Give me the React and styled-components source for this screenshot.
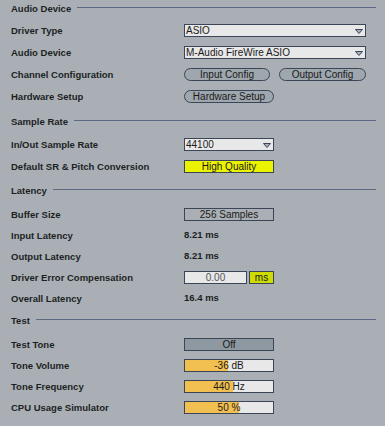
import React from "react";
import styled, { createGlobalStyle } from "styled-components";

const GlobalStyle = createGlobalStyle`
  html, body {
    margin: 0;
    padding: 0;
    background: #a9afb4;
  }
  body {
    font-family: "Liberation Sans", Arial, sans-serif;
    color: #1c1f24;
  }
`;

const Page = styled.div`
  width: 385px;
  height: 426px;
  padding: 0 9px 0 11px;
  box-sizing: border-box;
  background: #a9afb4;
  overflow: hidden;
`;

const Header = styled.div`
  display: flex;
  align-items: center;
  height: 16px;
  margin-top: ${(p) => p.$top || 0}px;
  font-size: 9.5px;
  font-weight: bold;

  &::after {
    content: "";
    flex: 1;
    height: 1px;
    margin: -1px 0 0 6px;
    background: #5d6a84;
  }
`;

const Rows = styled.div`
  display: flex;
  flex-direction: column;
  margin-top: ${(p) => p.$top || 0}px;
`;

const Row = styled.div`
  display: flex;
  align-items: center;
  height: ${(p) => p.$h || 21}px;
`;

const Label = styled.div`
  width: 173px;
  flex: none;
  font-size: 9.5px;
  font-weight: bold;
  white-space: nowrap;
`;

const Controls = styled.div`
  display: flex;
  align-items: center;
  gap: ${(p) => p.$gap || 0}px;
`;

const Value = styled.div`
  font-size: 9.5px;
  font-weight: bold;
  margin-top: -3px;
`;

const Select = styled.div`
  position: relative;
  width: ${(p) => p.$w}px;
  height: 13px;
  box-sizing: border-box;
  border: 1px solid #3a4557;
  background: #e8e8e8;
  font-size: 10px;
  line-height: 11px;
  padding-left: 1px;
  color: #1a1a1a;

  svg {
    position: absolute;
    right: 2px;
    top: 4px;
  }
`;

const Pill = styled.div`
  width: ${(p) => p.$w}px;
  height: 13px;
  box-sizing: border-box;
  border: 1px solid #3a4557;
  border-radius: 7px;
  background: #9ea6ae;
  font-size: 10px;
  line-height: 11px;
  text-align: center;
  color: #1a1a1a;
`;

const boxColors = {
  plain: "transparent",
  yellow: "#ecf300",
  lime: "#cedc00",
  off: "#8e98a0",
  field: "#e8e8e8",
};

const Box = styled.div`
  position: relative;
  width: ${(p) => p.$w || 90}px;
  height: 13px;
  box-sizing: border-box;
  border: 1px solid #3a4557;
  background: ${(p) => boxColors[p.$kind || "plain"]};
  font-size: 10px;
  line-height: 11px;
  text-align: center;
  color: ${(p) => (p.$muted ? "#50555c" : "#1a1a1a")};
  overflow: hidden;
`;

const Fill = styled.div`
  position: absolute;
  left: 0;
  top: 0;
  bottom: 0;
  background: #f2c050;
`;

const BoxText = styled.span`
  position: relative;
`;

const Arrow = () => (
  <svg width="8" height="5" viewBox="0 0 8 5">
    <polygon points="0.5,0.5 7.5,0.5 4,4.5" fill="#a7b0be" stroke="#3a4557" strokeWidth="1" />
  </svg>
);

const Slider = ({ pct, children }) => (
  <Box $kind="field">
    <Fill style={{ width: `${pct}%` }} />
    <BoxText>{children}</BoxText>
  </Box>
);

export default function App() {
  return (
    <>
      <GlobalStyle />
      <Page>
        <Header>Audio Device</Header>
        <Rows $top={3}>
          <Row $h={22}>
            <Label>Driver Type</Label>
            <Select $w={182}>
              ASIO
              <Arrow />
            </Select>
          </Row>
          <Row $h={22}>
            <Label>Audio Device</Label>
            <Select $w={182}>
              M-Audio FireWire ASIO
              <Arrow />
            </Select>
          </Row>
          <Row $h={22}>
            <Label>Channel Configuration</Label>
            <Controls $gap={9}>
              <Pill $w={86}>Input Config</Pill>
              <Pill $w={87}>Output Config</Pill>
            </Controls>
          </Row>
          <Row $h={22}>
            <Label>Hardware Setup</Label>
            <Pill $w={90}>Hardware Setup</Pill>
          </Row>
        </Rows>

        <Header $top={6}>Sample Rate</Header>
        <Rows $top={4}>
          <Row $h={22}>
            <Label>In/Out Sample Rate</Label>
            <Select $w={90}>
              44100
              <Arrow />
            </Select>
          </Row>
          <Row $h={22}>
            <Label>Default SR &amp; Pitch Conversion</Label>
            <Box $kind="yellow">High Quality</Box>
          </Row>
        </Rows>

        <Header $top={5}>Latency</Header>
        <Rows $top={6}>
          <Row>
            <Label>Buffer Size</Label>
            <Box>256 Samples</Box>
          </Row>
          <Row>
            <Label>Input Latency</Label>
            <Value>8.21 ms</Value>
          </Row>
          <Row>
            <Label>Output Latency</Label>
            <Value>8.21 ms</Value>
          </Row>
          <Row>
            <Label>Driver Error Compensation</Label>
            <Controls $gap={2}>
              <Box $kind="field" $w={63} $muted>
                0.00
              </Box>
              <Box $kind="lime" $w={25}>
                ms
              </Box>
            </Controls>
          </Row>
          <Row>
            <Label>Overall Latency</Label>
            <Value>16.4 ms</Value>
          </Row>
        </Rows>

        <Header $top={3}>Test</Header>
        <Rows $top={6}>
          <Row>
            <Label>Test Tone</Label>
            <Box $kind="off">Off</Box>
          </Row>
          <Row>
            <Label>Tone Volume</Label>
            <Slider pct={49}>-36 dB</Slider>
          </Row>
          <Row>
            <Label>Tone Frequency</Label>
            <Slider pct={55}>440 Hz</Slider>
          </Row>
          <Row>
            <Label>CPU Usage Simulator</Label>
            <Slider pct={61}>50 %</Slider>
          </Row>
        </Rows>
      </Page>
    </>
  );
}
